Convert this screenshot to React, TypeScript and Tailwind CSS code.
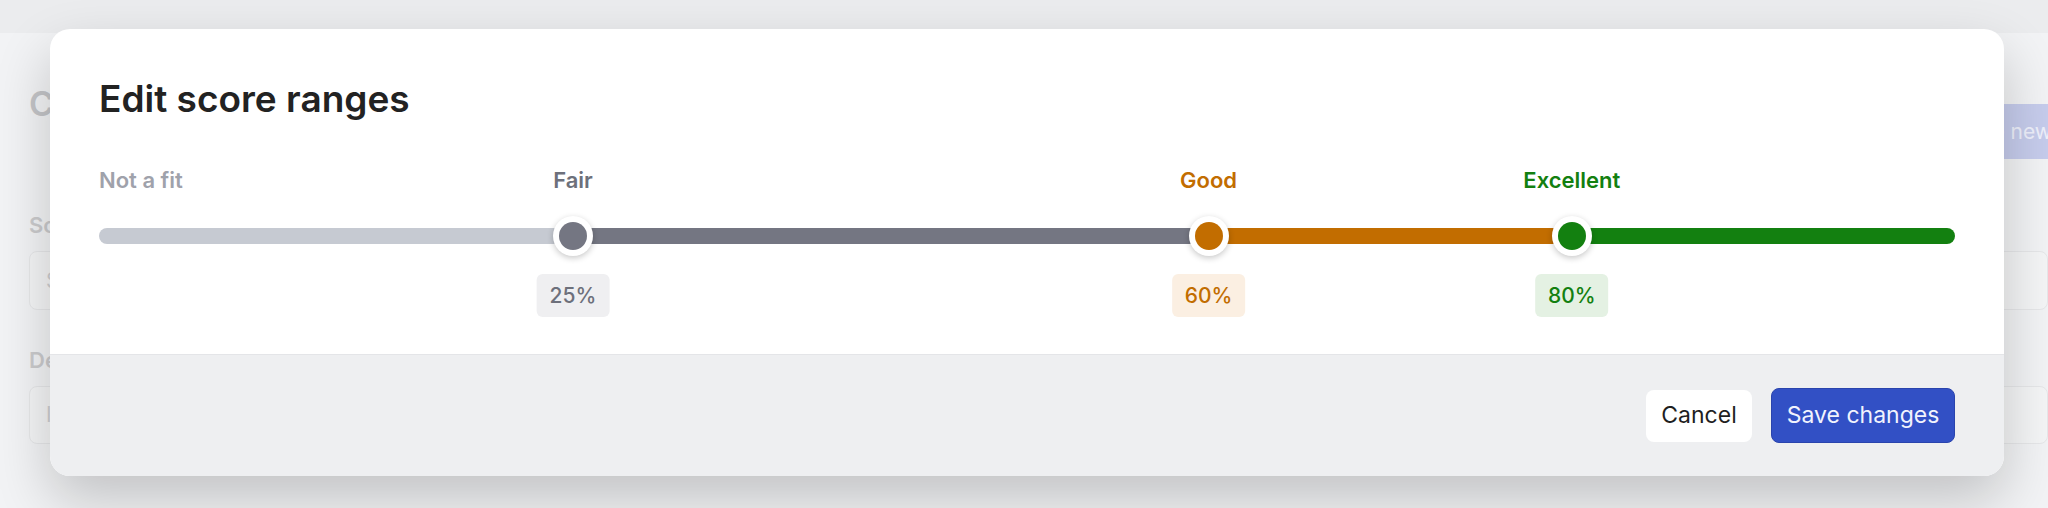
import React from "react";

type Stop = {
  label: string;
  value: number;
  text: string;
  dot: string;
  fill: string;
  badge: string;
};

const stops: Stop[] = [
  {
    label: "Fair",
    value: 25,
    text: "text-[#6d707b]",
    dot: "bg-[#747682]",
    fill: "bg-[#747682]",
    badge: "bg-[#efeff1] text-[#6d707b]",
  },
  {
    label: "Good",
    value: 60,
    text: "text-[#c26d00]",
    dot: "bg-[#c26d00]",
    fill: "bg-[#c26d00]",
    badge: "bg-[#fbefe2] text-[#c26d00]",
  },
  {
    label: "Excellent",
    value: 80,
    text: "text-[#138010]",
    dot: "bg-[#138010]",
    fill: "bg-[#138010]",
    badge: "bg-[#e4f1e3] text-[#138010]",
  },
];

// thumb is 40px wide, so its centre travels from 20px to (100% - 20px)
const at = (v: number) => `calc(20px + ${v / 100} * (100% - 40px))`;
const span = (a: number, b: number) => `calc(${(b - a) / 100} * (100% - 40px))`;

function BackgroundPage() {
  return (
    <div className="absolute inset-0 bg-[#f2f3f5]">
      <div className="h-[33px] bg-[#ebecee]"></div>
      <div className="pl-[29px]">
        <div className="flex items-start justify-between mt-[49px]">
          <h1 className="text-[34px] font-semibold leading-[44px] text-[#c4c5c8]">
            C
          </h1>
          <div className="mt-[22px] -mr-[28px] h-[55px] px-6 flex items-center rounded-lg bg-[#c6ccec] text-[21px] text-[#eef0fb]">
            Create new
          </div>
        </div>
        <div className="mt-[52px] text-[22px] font-semibold text-[#cbcbcd] leading-[28px]">
          Score name
        </div>
        <div className="mt-[12px] h-[59px] rounded-lg border border-[#e6e7e9] bg-[#f4f5f6] flex items-center px-4 text-[21px] text-[#cfcfd1]">
          Standard
        </div>
        <div className="mt-[36px] text-[22px] font-semibold text-[#cbcbcd] leading-[28px]">
          Description
        </div>
        <div className="mt-[12px] h-[58px] rounded-lg border border-[#e6e7e9] bg-[#f4f5f6] flex items-center px-4 text-[21px] text-[#cfcfd1]">
          I
        </div>
      </div>
    </div>
  );
}

function ScoreSlider() {
  const bounds = [0, ...stops.map((s) => s.value), 100];
  const fills = ["bg-[#c6cad2]", ...stops.map((s) => s.fill)];

  return (
    <div className="mt-[46px]">
      <div className="relative h-[28px] text-[22px] font-semibold leading-[28px]">
        <span className="text-[#9fa2ab]">Not a fit</span>
        {stops.map((s) => (
          <span
            key={s.label}
            className={`absolute top-0 -translate-x-1/2 whitespace-nowrap ${s.text}`}
            style={{ left: at(s.value) }}
          >
            {s.label}
          </span>
        ))}
      </div>

      <div className="relative h-[40px] mt-[22px]">
        <div className="absolute left-0 right-0 top-[12px] h-4 rounded-full overflow-hidden">
          {fills.map((f, i) => {
            const a = bounds[i];
            const b = bounds[i + 1];
            const left = a === 0 ? "0px" : at(a);
            const width =
              a === 0 ? at(b) : b === 100 ? `calc(100% - ${at(a)})` : span(a, b);
            return (
              <div
                key={i}
                className={`absolute top-0 h-full ${f}`}
                style={{ left, width }}
              ></div>
            );
          })}
        </div>
        {stops.map((s) => (
          <div
            key={s.label}
            className="absolute top-0 -translate-x-1/2 w-10 h-10 rounded-full bg-white shadow-[0_2px_6px_rgba(0,0,0,0.22)] flex items-center justify-center"
            style={{ left: at(s.value) }}
          >
            <div className={`w-[28px] h-[28px] rounded-full ${s.dot}`}></div>
          </div>
        ))}
      </div>

      <div className="relative h-[43px] mt-[18px]">
        {stops.map((s) => (
          <div
            key={s.label}
            className={`absolute top-0 -translate-x-1/2 h-[43px] px-[13px] flex items-center rounded-md text-[21px] font-medium ${s.badge}`}
            style={{ left: at(s.value) }}
          >
            {s.value}%
          </div>
        ))}
      </div>
    </div>
  );
}

export default function App() {
  return (
    <div
      className="relative w-full h-[508px] overflow-hidden"
      style={{ fontFamily: "Inter, 'Noto Sans', sans-serif" }}
    >
      <BackgroundPage />

      <div className="absolute left-[50px] top-[29px] w-[1954px] rounded-[20px] bg-white overflow-hidden shadow-[0_24px_56px_rgba(0,0,0,0.2)]">
        <div className="px-[49px] pt-[48px] pb-[37px]">
          <h2 className="text-[37px] font-semibold leading-[43px] text-[#222222]">
            Edit score ranges
          </h2>
          <ScoreSlider />
        </div>
        <div className="h-[122px] border-t border-[#e4e5e8] bg-[#eeeff1] px-[49px] flex items-center justify-end gap-[19px]">
          <button className="w-[106px] h-[52px] rounded-lg bg-white text-[23px] font-normal text-[#1f1f1f]">
            Cancel
          </button>
          <button className="w-[184px] h-[55px] rounded-lg bg-[#3250c5] border border-[#2a44ad] text-[23px] font-normal text-[#f1f3fd]">
            Save changes
          </button>
        </div>
      </div>
    </div>
  );
}
